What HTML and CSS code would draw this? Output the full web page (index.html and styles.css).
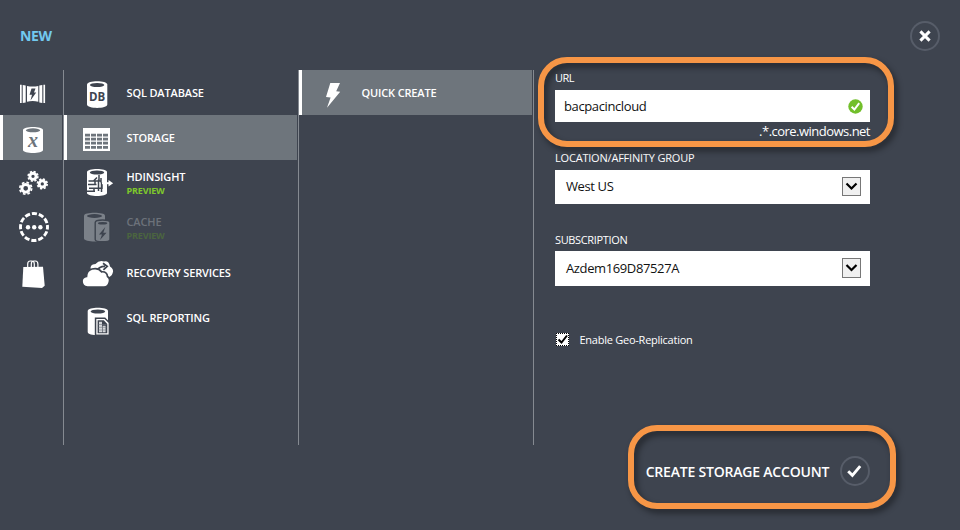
FILE: index.html
```
<!DOCTYPE html>
<html lang="en">
<head>
<meta charset="utf-8">
<title>New storage account</title>
<link rel="stylesheet" href="styles.css">
</head>
<body>
<div class="drawer">
  <header class="top">
    <h1>NEW</h1>
    <button class="round" aria-label="Close"><svg width="30" height="30" viewBox="0 0 30 30"><path d="M10.400 10.400l9.200 9.200M19.600 10.400l-9.200 9.200" stroke="#fff" stroke-width="3"/></svg></button>
  </header>
  <main class="panes">
    <nav class="pane rail">
      <a class="row"><svg width="59" height="45" viewBox="3 70 59 45" fill="#fff"><path d="M20 84.700h1.700v18.300H20zM22.700 85l3 .5v17l-3 .5zM27 86q5.700 1.200 11.300 0v15.700q-5.600-1.200-11.300 0zM39.300 85.500l3-.5v18l-3-.5zM43.400 84.700h1.700v18.300h-1.700z"/><path fill="#3e444f" d="M31.500 88.500h4l-1.500 4h2.200l-5.700 8 1.500-5.700h-2.500z"/></svg></a>
      <a class="row selected"><svg width="59" height="45" viewBox="3 115 59 45"><path fill="#fff" d="M23 130c0-4 20-4 20 0v20c0 4-20 4-20 0z"/><ellipse cx="33" cy="130.300" rx="7.200" ry="2" fill="#6e757c"/><text class="glyph-x" x="33" y="146.500">x</text></svg></a>
      <a class="row"><svg width="59" height="45" viewBox="3 160 59 45" fill="none" stroke="#fff"><g stroke-width="2.900"><circle cx="33" cy="176.300" r="3.100"/><circle cx="25.700" cy="188.300" r="3.800"/><circle cx="42.300" cy="183.900" r="3.100"/></g><g stroke-width="1.800"><circle cx="33" cy="176.300" r="4.800" stroke-dasharray="2.100 1.670"/><circle cx="25.700" cy="188.300" r="5.900" stroke-dasharray="2.600 2.034"/><circle cx="42.300" cy="183.900" r="4.800" stroke-dasharray="2.100 1.670"/></g></svg></a>
      <a class="row"><svg width="59" height="45" viewBox="3 205 59 45"><circle cx="34" cy="227" r="13.500" fill="none" stroke="#fff" stroke-width="2.900" stroke-dasharray="5.200 1.869" stroke-dashoffset="2.600"/><g fill="#fff"><circle cx="28" cy="227.200" r="2.200"/><circle cx="34.200" cy="227.200" r="2.200"/><circle cx="40.400" cy="227.200" r="2.200"/></g></svg></a>
      <a class="row"><svg width="59" height="45" viewBox="3 250 59 45"><path fill="#fff" d="M23.300 267l19.700-.3 1.700 19-2.700 2.300-19.700-1.300z"/><path d="M27.700 268v-4q0-3 2.600-3h1.400q2.600 0 2.600 3v4M31.300 268v-4q0-3 2.600-3h1.400q2.600 0 2.600 3v4" fill="none" stroke="#fff" stroke-width="1.200"/></svg></a>
    </nav>
    <nav class="pane">
      <a class="row"><svg width="56" height="45" viewBox="67 70 56 45"><path fill="#fff" d="M87 84.500c0-4.500 20.300-4.500 20.300 0v20c0 4.500-20.300 4.500-20.300 0z"/><ellipse cx="97.100" cy="85" rx="7.200" ry="2.100" fill="#3e444f"/><text class="glyph-db" x="97" y="101">DB</text></svg><span>SQL DATABASE</span></a>
      <a class="row selected"><svg width="56" height="45" viewBox="67 115 56 45"><path fill="#fff" d="M83 128h27v23H83z"/><path d="M85 135.200h24M85 139.200h24M85 143.200h24M85 147.300h24" stroke="#6e757c" stroke-width="2.700" stroke-dasharray="5 1"/></svg><span>STORAGE</span></a>
      <a class="row preview"><svg width="56" height="45" viewBox="67 160 56 45"><path fill="#fff" d="M87 172c0-4 20-4 20 0v21c0 4-20 4-20 0z"/><ellipse cx="97" cy="172.500" rx="7.200" ry="2" fill="#3e444f"/><path d="M99 175v5.500M97 177.500l-3.500 3.500H89M101 178v4.500M88.500 181H101M95 181v3.500M88 184.600h8.500M98.500 179.500V191M94 187.500V191M89 188.300h13v-5.500M101.500 182.600v9.500M87 191.200h8" fill="none" stroke="#3e444f" stroke-width="1.500"/><path d="M102 183.200h8" stroke="#fff" stroke-width="2"/><path fill="#fff" d="M108.500 180l4.600 3.200-4.600 3.200z"/></svg><span>HDINSIGHT<small>PREVIEW</small></span></a>
      <a class="row preview disabled"><svg width="56" height="45" viewBox="67 205 56 45"><path fill="#7b8189" d="M84 215.500c0-3.700 21-3.700 21 0v23c0 4-21 4-21 0z"/><ellipse cx="94.500" cy="216" rx="7.500" ry="1.900" fill="#3e444f"/><path d="M95.200 222.500c0-3.300 14.800-3.300 14.800 0v17c0 3-14.800 3-14.800 0z" fill="#7b8189" stroke="#3e444f" stroke-width="1.400"/><ellipse cx="102.600" cy="223.200" rx="4.700" ry="1.300" fill="#3e444f"/><path fill="#3e444f" d="M105.300 227l-6.300 7.500h3l-2 5.500 6.500-7.300h-3.200z"/></svg><span>CACHE<small>PREVIEW</small></span></a>
      <a class="row"><svg width="56" height="45" viewBox="67 250 56 45"><path fill="#fff" d="M91 270q-2-5.500 4.500-6 3.500-4 8.500-2.500 5-1 6 5 4.500 3 2.500 7-1 3-5 4z"/><path d="M97 270.500q2.500-4.500 8-4.200M103 263.300l4.200 3-3.800 3.500" fill="none" stroke="#3e444f" stroke-width="1.700"/><path fill="#fff" stroke="#3e444f" stroke-width="1.700" d="M87.500 287q-5.500-.5-5.500-6 .3-4 4.500-4.500 .2-6 5.500-7.500 6.500-1.600 9.500 2.800 5.500-.5 6 4.700 3 2 1.700 6-1.200 4.500-5.200 4.500z"/></svg><span>RECOVERY SERVICES</span></a>
      <a class="row"><svg width="56" height="45" viewBox="67 295 56 45"><path fill="#fff" d="M87.700 311c0-4.200 20.300-4.200 20.300 0v21c0 4.300-20.300 4.300-20.300 0z"/><ellipse cx="97.900" cy="311.500" rx="7.300" ry="2" fill="#3e444f"/><path d="M94.800 317.500h10.400l4.800 5V336H94.800z" fill="#3e444f"/><path d="M96.300 319h8.300l4 4v11.500H96.300z" fill="#fff"/><path d="M97.600 320.300h6.200l3.500 3.600v9.300h-9.700z" fill="#3e444f"/><path d="M99 321.800h3v10.500h-3zM102.600 325.700h3v6.600h-3z" fill="#d5d7da"/><path d="M98.500 324.500h8M98.500 327.300h8M98.500 330h8" stroke="#707680" stroke-width=".6"/></svg><span>SQL REPORTING</span></a>
    </nav>
    <nav class="pane">
      <a class="row selected"><svg width="56" height="45" viewBox="302 70 56 45"><path fill="#fff" d="M330.300 83H340l-3.800 8.200 4 .5-13.200 16 3.600-10.200-4.600-.4z"/></svg><span>QUICK CREATE</span></a>
    </nav>
    <form class="form">
      <label class="caption url">URL</label>
      <div class="field text"><span>bacpacincloud</span><svg width="15" height="15" viewBox="0 0 15 15"><circle cx="7.500" cy="7.500" r="7.200" fill="#72bf2b"/><path d="M3.600 7.700l2.800 2.800 4.800-6.300" fill="none" stroke="#fff" stroke-width="2"/></svg></div>
      <div class="suffix">.*.core.windows.net</div>
      <label class="caption location">LOCATION/AFFINITY GROUP</label>
      <div class="field select"><span>West US</span><i class="arrow"><svg width="17" height="17" viewBox="0 0 17 17"><path d="M3.500 5.500l5 5 5-5" fill="none" stroke="#000" stroke-width="2.200"/></svg></i></div>
      <label class="caption subscription">SUBSCRIPTION</label>
      <div class="field select tall"><span>Azdem169D87527A</span><i class="arrow"><svg width="17" height="18" viewBox="0 0 17 18"><path d="M3.500 6l5 5 5-5" fill="none" stroke="#000" stroke-width="2.200"/></svg></i></div>
      <div class="geo"><i class="check"><svg width="11" height="11" viewBox="0 0 11 11"><path d="M1.500 5.500l3 3L10 1.500" fill="none" stroke="#000" stroke-width="2"/></svg></i><span>Enable Geo-Replication</span></div>
    </form>
  </main>
  <footer class="actions">
    <span>CREATE STORAGE ACCOUNT</span>
    <button class="round" aria-label="Create"><svg width="30" height="30" viewBox="0 0 30 30"><path d="M8.200 15.200l4.200 4.200 7.800-9.300" fill="none" stroke="#fff" stroke-width="2.900"/></svg></button>
  </footer>
  <div class="callout callout-url"></div>
  <div class="callout callout-create"></div>
</div>
</body>
</html>
```
FILE: styles.css
```
* { box-sizing: border-box; }
body {
  margin: 0;
  background: #3e444f;
  color: #fff;
  font-family: "Open Sans", "Noto Sans", sans-serif;
  font-size: 11px;
}
.drawer {
  position: relative;
  width: 960px;
  height: 530px;
  overflow: hidden;
  white-space: nowrap;
}
.top {
  display: flex;
  justify-content: space-between;
  align-items: flex-start;
  height: 70px;
  padding: 21px 20px 0 20px;
}
h1 {
  margin: 5px 0 0;
  color: #72c9ef;
  font-size: 14px;
  line-height: 20px;
  font-weight: 700;
  letter-spacing: -0.3px;
}
.round {
  display: block;
  width: 30px;
  height: 30px;
  padding: 0;
  border: 0;
  border-radius: 50%;
  background: none;
  box-shadow: inset 0 0 0 2px #575d69;
}
.round svg { display: block; }
.panes {
  display: grid;
  grid-template-columns: 64px 235px 235px 1fr;
  height: 375px;
}
.pane {
  padding-right: 1px;
  border-right: 1px solid #858a91;
}
.row {
  display: flex;
  align-items: center;
  height: 45px;
  border-left: 3px solid transparent;
  font-weight: 600;
  letter-spacing: -0.15px;
  line-height: 14px;
}
.row svg { flex: none; margin-right: 3.5px; }
.rail .row svg { margin: 0; }
.selected { background: #6e757c; border-left-color: #fff; }
.preview span { padding-top: 2px; }
.row small {
  display: block;
  color: #7fc92c;
  font-size: 9px;
  font-weight: 700;
}
.row.disabled { color: #6c727a; }
.row.disabled small { color: #4b653f; }
.glyph-x {
  fill: #6e757c;
  font: italic 700 20px "Liberation Serif", serif;
  text-anchor: middle;
}
.glyph-db {
  fill: #3e444f;
  font-size: 11.5px;
  font-weight: 700;
  letter-spacing: 0;
  text-anchor: middle;
}
.form { width: 336px; padding-left: 21px; letter-spacing: -0.2px; }
.caption { display: block; line-height: 16px; }
.url { margin-bottom: 4px; letter-spacing: -0.5px; }
.field {
  display: flex;
  align-items: center;
  justify-content: space-between;
  background: #fff;
  color: #111;
  font-size: 13px;
  letter-spacing: -0.38px;
}
.text { height: 32px; padding: 0 7px 0 9px; }
.select { height: 34px; padding: 0 9px 0 11px; }
.select span { padding-bottom: 2px; }
.tall { height: 35px; }
.arrow {
  width: 19px;
  height: 19px;
  margin-bottom: 1px;
  border: 1px solid #777;
  background: #f0f0f0;
}
.tall .arrow { height: 20px; }
.arrow svg { display: block; }
.suffix {
  height: 28px;
  line-height: 18px;
  font-size: 13px;
  letter-spacing: -0.52px;
  text-align: right;
}
.location { margin-bottom: 4px; }
.subscription { margin: 28px 0 3px; letter-spacing: -0.35px; }
.geo { display: flex; align-items: center; gap: 10.5px; height: 16px; margin: 45px 0 0 1px; letter-spacing: -0.25px; }
.check {
  width: 13px;
  height: 13px;
  border: 1px dotted #000;
  background: #fff;
}
.check svg { display: block; }
.actions {
  display: flex;
  justify-content: flex-end;
  align-items: center;
  gap: 10.8px;
  height: 52px;
  padding-right: 90px;
  font-size: 14px;
  font-weight: 600;
  letter-spacing: -0.2px;
}
.callout {
  position: absolute;
  border: 6px solid #f79646;
  border-radius: 29px;
  filter: drop-shadow(3px 4px 3px rgba(0, 0, 0, .45));
  pointer-events: none;
}
.callout-url { left: 538px; top: 57px; width: 356px; height: 90px; }
.callout-create { left: 628px; top: 425px; width: 268px; height: 84px; }
```
